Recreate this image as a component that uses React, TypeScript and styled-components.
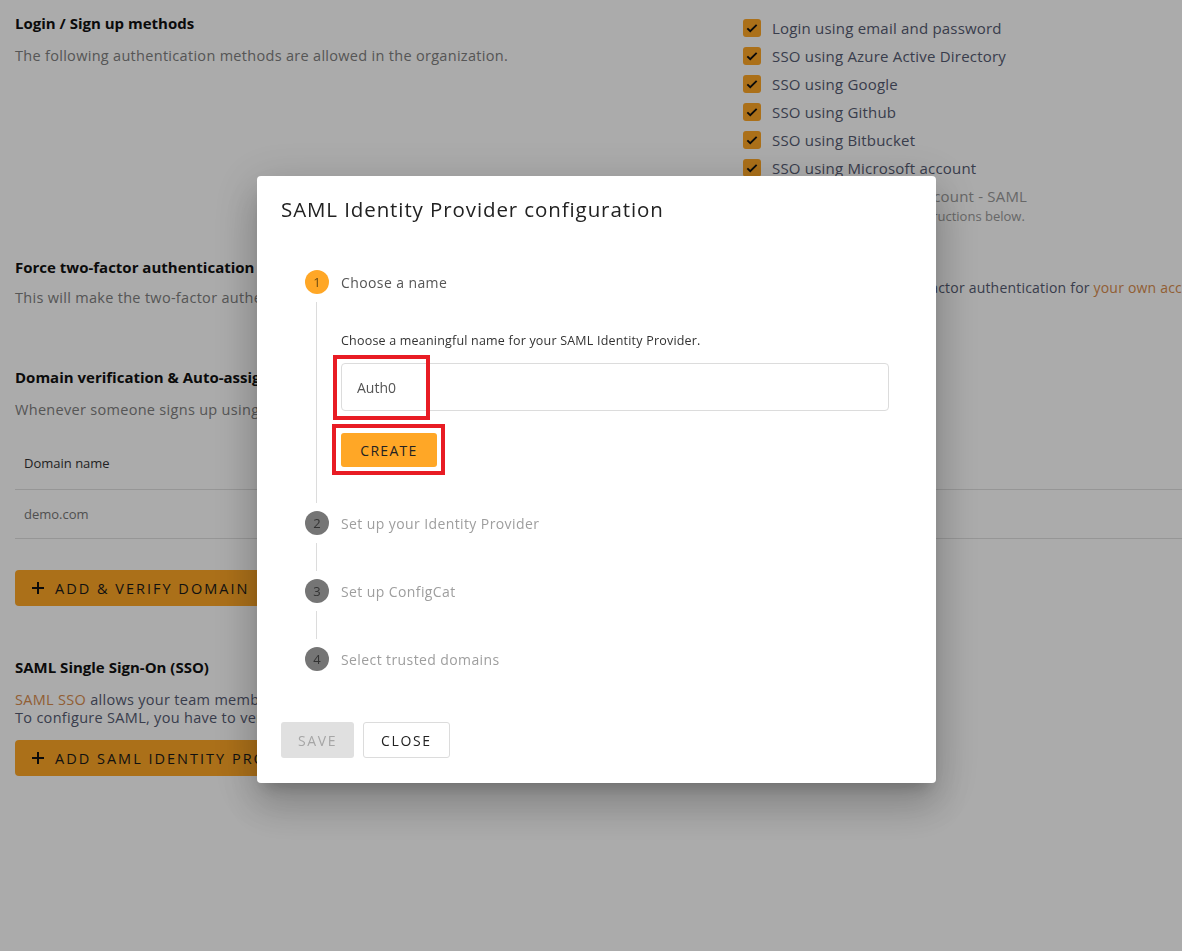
import React from "react";
import styled, { createGlobalStyle } from "styled-components";

const GlobalStyle = createGlobalStyle`
  html, body {
    margin: 0;
    padding: 0;
    background: #ffffff;
    font-family: "Open Sans", "Liberation Sans", sans-serif;
    color: #333;
  }
  * { box-sizing: border-box; }
`;

// =======================
// page behind the dialog
// =======================
const Page = styled.div`
  width: 1182px;
  height: 951px;
  padding: 0 15px;
  overflow: hidden;
`;

const Row = styled.section<{ $top: number; $height: number }>`
  display: grid;
  grid-template-columns: 728px 1fr;
  margin-top: ${(p) => p.$top}px;
  min-height: ${(p) => p.$height}px;
`;

const Block = styled.section<{ $top: number }>`
  margin-top: ${(p) => p.$top}px;
`;

const Title = styled.h3`
  margin: 0;
  font-size: 15px;
  font-weight: 700;
  color: #111;
  line-height: 20px;
`;

const Desc = styled.p<{ $top?: number }>`
  margin: ${(p) => p.$top ?? 14}px 0 0;
  font-size: 14.5px;
  line-height: 18px;
  letter-spacing: 0.3px;
  color: #808080;
  white-space: nowrap;
`;

const Link = styled.span`
  color: #d98d4e;
`;

const DarkText = styled.span`
  color: #555b72;
`;

const CheckList = styled.ul`
  list-style: none;
  margin: 0;
  padding: 19px 0 0;
  display: flex;
  flex-direction: column;
  gap: 10px;
`;

const CheckItem = styled.li<{ $disabled?: boolean }>`
  display: flex;
  align-items: center;
  gap: 11px;
  height: 18px;
  font-size: 15px;
  letter-spacing: 0.2px;
  color: ${(p) => (p.$disabled ? "#9a9a9a" : "#555b72")};
`;

const Box = styled.span<{ $off?: boolean }>`
  width: 18px;
  height: 18px;
  border-radius: 3px;
  background: ${(p) => (p.$off ? "#e6e6e6" : "#ffa726")};
  display: flex;
  align-items: center;
  justify-content: center;
`;

const Hint = styled.div`
  margin: 2px 0 0 29px;
  font-size: 13px;
  color: #9a9a9a;
`;

const SideText = styled.p`
  margin: 21px 0 0;
  font-size: 14px;
  letter-spacing: 0.2px;
  color: #555b72;
  white-space: nowrap;
`;

const Table = styled.div`
  margin-top: 17px;
  width: 1167px;
`;

const TableRow = styled.div<{ $head?: boolean }>`
  height: ${(p) => (p.$head ? 54 : 49)}px;
  display: flex;
  align-items: center;
  padding: 0 9px;
  border-bottom: 1px solid #e0e0e0;
  font-size: 13px;
  color: ${(p) => (p.$head ? "#333" : "#777")};
`;

const OrangeButton = styled.button<{ $top: number }>`
  margin-top: ${(p) => p.$top}px;
  height: 36px;
  display: inline-flex;
  align-items: center;
  gap: 10px;
  padding: 0 16px;
  border: none;
  border-radius: 4px;
  background: #ffa726;
  font-family: inherit;
  font-size: 14.5px;
  letter-spacing: 2px;
  color: #1a1a1a;
  white-space: nowrap;
`;

// =======================
// overlay + dialog
// =======================
const Backdrop = styled.div`
  position: fixed;
  inset: 0;
  background: rgba(0, 0, 0, 0.33);
`;

const Dialog = styled.div`
  position: fixed;
  left: 257px;
  top: 176px;
  width: 679px;
  height: 607px;
  background: #fff;
  border-radius: 4px;
  box-shadow: 0 11px 15px -7px rgba(0, 0, 0, 0.2), 0 24px 38px 3px rgba(0, 0, 0, 0.14),
    0 9px 46px 8px rgba(0, 0, 0, 0.12);
  padding: 20px 24px 0;
  display: flex;
  flex-direction: column;
`;

const DialogTitle = styled.h2`
  margin: 0;
  font-size: 20.5px;
  font-weight: 400;
  line-height: 26px;
  letter-spacing: 0.9px;
  color: #222;
`;

const Stepper = styled.div`
  margin-top: 48px;
  padding-left: 24px;
  display: flex;
  flex-direction: column;
`;

const StepHead = styled.div`
  display: flex;
  align-items: center;
  gap: 12px;
  height: 24px;
`;

const Circle = styled.span<{ $active?: boolean }>`
  width: 24px;
  height: 24px;
  border-radius: 50%;
  background: ${(p) => (p.$active ? "#ffa726" : "#757575")};
  color: ${(p) => (p.$active ? "#6b4a12" : "#333")};
  font-size: 13px;
  display: flex;
  align-items: center;
  justify-content: center;
`;

const StepLabel = styled.span<{ $active?: boolean }>`
  font-size: 14px;
  letter-spacing: 0.4px;
  color: ${(p) => (p.$active ? "#555" : "#9e9e9e")};
`;

const StepBody = styled.div<{ $pad?: number; $height?: number }>`
  margin: 8px 0 8px 11px;
  border-left: 1px solid #dcdcdc;
  padding: ${(p) => p.$pad ?? 0}px 0 0 24px;
  min-height: ${(p) => p.$height ?? 28}px;
`;

const StepText = styled.p`
  margin: 0;
  font-size: 12.5px;
  letter-spacing: 0.2px;
  color: #333;
  line-height: 16px;
`;

const Field = styled.div`
  position: relative;
  margin-top: 14px;
  width: 548px;
  height: 48px;
  border: 1px solid #dcdcdc;
  border-radius: 4px;
  display: flex;
  align-items: center;
  padding-left: 15px;
  font-size: 14px;
  color: #555;
`;

const Highlight = styled.span<{ $w: number; $h: number }>`
  position: absolute;
  left: -9px;
  top: -9px;
  width: ${(p) => p.$w}px;
  height: ${(p) => p.$h}px;
  border: 4px solid #e81c24;
  pointer-events: none;
`;

const CreateWrap = styled.div`
  position: relative;
  margin-top: 22px;
  width: 96px;
  margin-bottom: 36px;
`;

const CreateButton = styled.button`
  width: 96px;
  height: 34px;
  border: none;
  border-radius: 3px;
  background: #ffa726;
  font-family: inherit;
  font-size: 14px;
  letter-spacing: 1.3px;
  color: #222;
`;

const Footer = styled.div`
  margin-top: auto;
  margin-bottom: 25px;
  display: flex;
  gap: 9px;
`;

const FlatButton = styled.button<{ $disabled?: boolean }>`
  height: 36px;
  padding: 0 17px;
  border-radius: 3px;
  font-family: inherit;
  font-size: 14px;
  letter-spacing: 1.6px;
  border: ${(p) => (p.$disabled ? "none" : "1px solid #dcdcdc")};
  background: ${(p) => (p.$disabled ? "#e0e0e0" : "#fff")};
  color: ${(p) => (p.$disabled ? "#a6a6a6" : "#222")};
`;

const Check = () => (
  <svg width="14" height="14" viewBox="0 0 24 24" fill="none" stroke="#111" strokeWidth="3.2">
    <path d="M4 12.5l5 5L20 6.5" />
  </svg>
);

const Plus = () => (
  <svg width="14" height="14" viewBox="0 0 14 14" stroke="#111" strokeWidth="2">
    <path d="M7 1v12M1 7h12" />
  </svg>
);

const methods = [
  "Login using email and password",
  "SSO using Azure Active Directory",
  "SSO using Google",
  "SSO using Github",
  "SSO using Bitbucket",
  "SSO using Microsoft account",
];

const steps = ["Set up your Identity Provider", "Set up ConfigCat", "Select trusted domains"];

const App: React.FC = () => {
  return (
    <>
      <GlobalStyle />
      <Page>
        {/* login methods */}
        <Row $top={0} $height={255}>
          <div style={{ paddingTop: 13 }}>
            <Title>Login / Sign up methods</Title>
            <Desc>The following authentication methods are allowed in the organization.</Desc>
          </div>
          <div>
            <CheckList>
              {methods.map((m) => (
                <CheckItem key={m}>
                  <Box>
                    <Check />
                  </Box>
                  {m}
                </CheckItem>
              ))}
              <CheckItem $disabled>
                <Box $off />
                SSO using company account - SAML
              </CheckItem>
            </CheckList>
            <Hint>Set up SAML using the instructions below.</Hint>
          </div>
        </Row>

        {/* 2FA */}
        <Row $top={2} $height={110}>
          <div>
            <Title>Force two-factor authentication</Title>
            <Desc $top={12}>This will make the two-factor authentication mandatory for every member.</Desc>
          </div>
          <SideText>
            Please first enable the two-factor authentication for <Link>your own account</Link>
          </SideText>
        </Row>

        {/* domains */}
        <Block $top={0}>
          <Title>Domain verification &amp; Auto-assign</Title>
          <Desc>Whenever someone signs up using a verified domain, they will be added to the organization.</Desc>
          <Table>
            <TableRow $head>Domain name</TableRow>
            <TableRow>demo.com</TableRow>
          </Table>
          <OrangeButton $top={31}>
            <Plus />
            ADD &amp; VERIFY DOMAIN
          </OrangeButton>
        </Block>

        {/* SAML */}
        <Block $top={51}>
          <Title>SAML Single Sign-On (SSO)</Title>
          <Desc $top={14}>
            <Link>SAML SSO</Link> <DarkText>allows your team members to sign in through your Identity Provider (IdP).</DarkText>
          </Desc>
          <Desc $top={0}>
            <DarkText>To configure SAML, you have to verify at least one domain first.</DarkText>
          </Desc>
          <div>
            <OrangeButton $top={13}>
              <Plus />
              ADD SAML IDENTITY PROVIDER
            </OrangeButton>
          </div>
        </Block>
      </Page>

      <Backdrop />

      <Dialog>
        <DialogTitle>SAML Identity Provider configuration</DialogTitle>
        <Stepper>
          <StepHead>
            <Circle $active>1</Circle>
            <StepLabel $active>Choose a name</StepLabel>
          </StepHead>
          <StepBody $pad={31}>
            <StepText>Choose a meaningful name for your SAML Identity Provider.</StepText>
            <Field>
              Auth0
              <Highlight $w={97} $h={65} />
            </Field>
            <CreateWrap>
              <CreateButton>CREATE</CreateButton>
              <Highlight $w={113} $h={51} />
            </CreateWrap>
          </StepBody>
          {steps.map((s, i) => (
            <React.Fragment key={s}>
              <StepHead>
                <Circle>{i + 2}</Circle>
                <StepLabel>{s}</StepLabel>
              </StepHead>
              {i < steps.length - 1 && <StepBody $height={28} />}
            </React.Fragment>
          ))}
        </Stepper>
        <Footer>
          <FlatButton $disabled>SAVE</FlatButton>
          <FlatButton>CLOSE</FlatButton>
        </Footer>
      </Dialog>
    </>
  );
};

export default App;
